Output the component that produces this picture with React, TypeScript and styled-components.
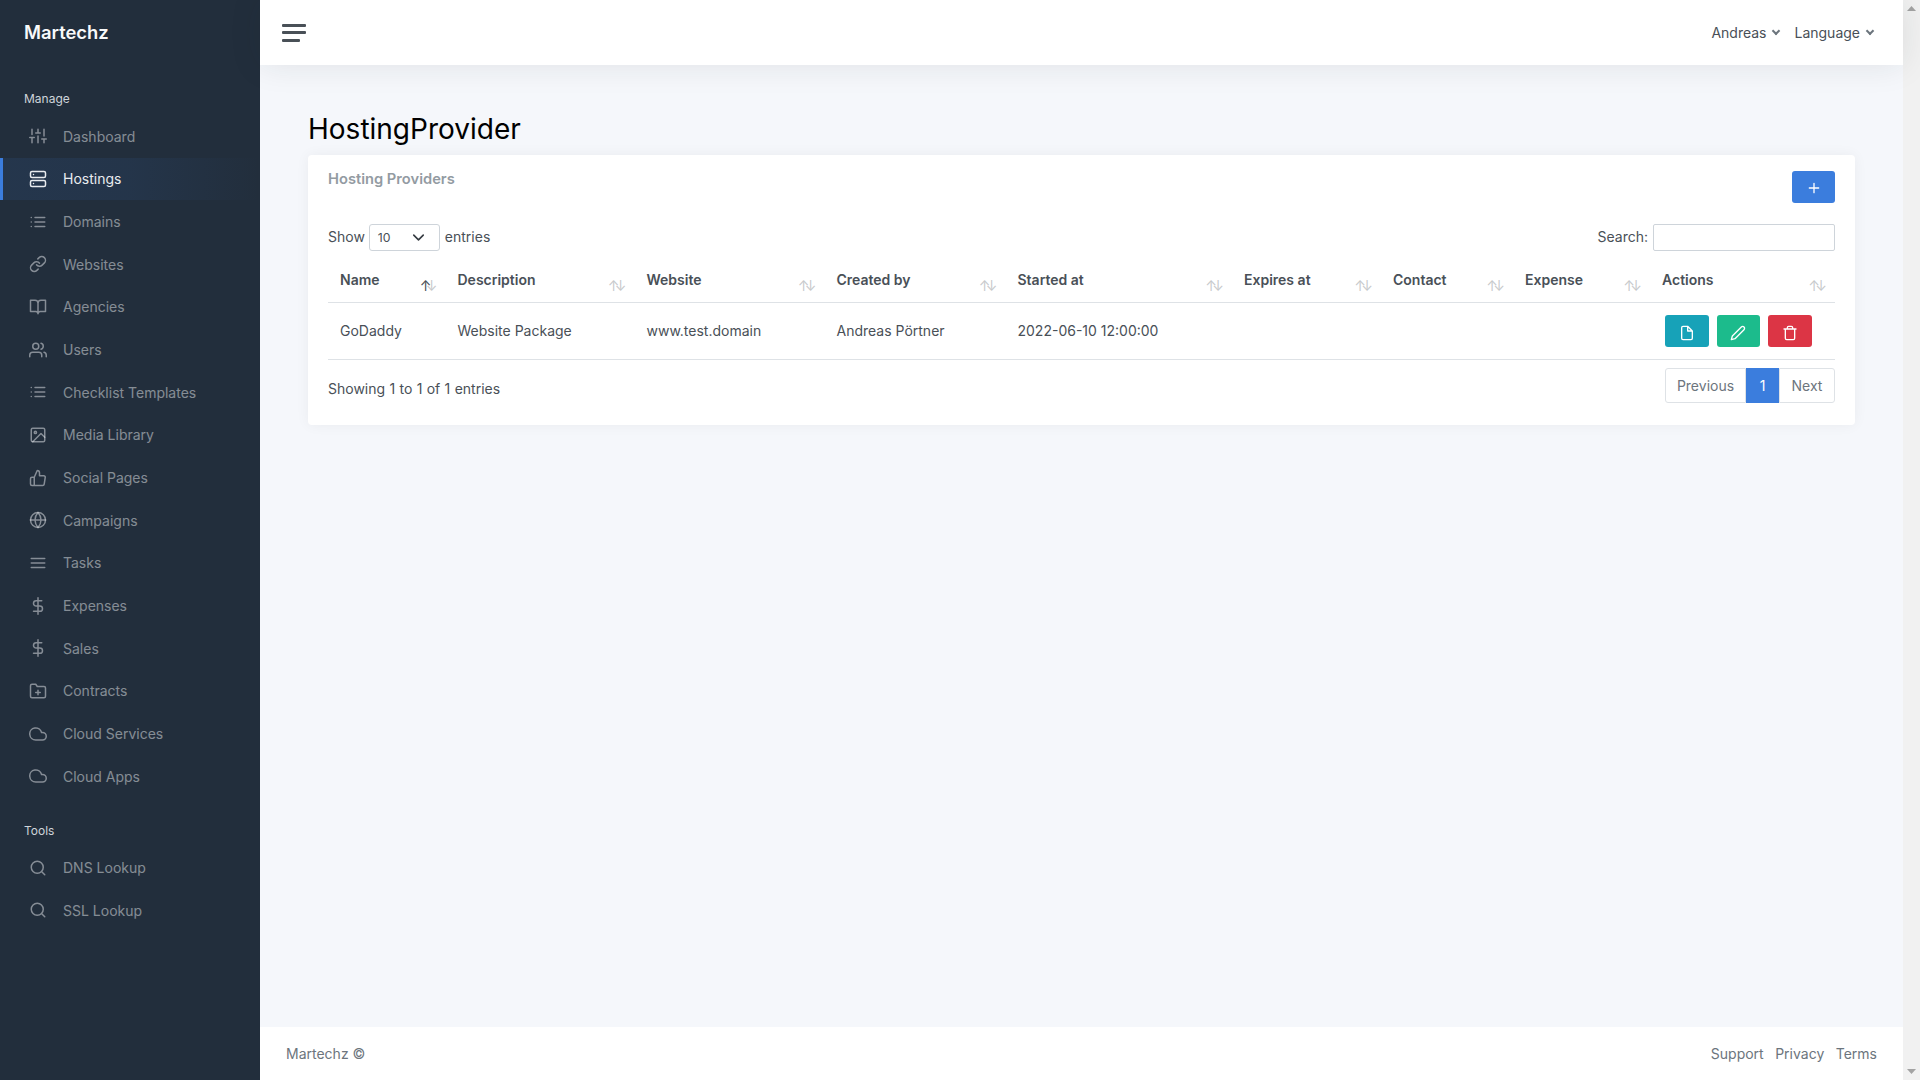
import React from "react";
import styled, { createGlobalStyle } from "styled-components";

const GlobalStyle = createGlobalStyle`
  html, body {
    margin: 0;
    padding: 0;
    height: 100%;
    overflow: hidden;
    background: #f5f7fb;
  }
  body {
    font-family: Inter, "Noto Sans", sans-serif;
    font-size: 14px;
    line-height: 1.5;
    color: #495057;
  }
  * {
    box-sizing: border-box;
  }
`;

const Shell = styled.div`
  display: flex;
  height: 1080px;
`;

const Sidebar = styled.nav`
  width: 260px;
  flex: none;
  background: #222e3c;
`;

const Brand = styled.div`
  padding: 19px 24px;
  height: 66px;
  font-size: 18.4px;
  line-height: 27px;
  font-weight: 600;
  color: #f8f9fa;
`;

const SectionHeader = styled.div`
  padding: 24px 24px 7px;
  font-size: 12px;
  line-height: 18px;
  color: #ced4da;
`;

const NavList = styled.ul`
  list-style: none;
  margin: 0;
  padding: 0;
`;

const NavLink = styled.a<{ $active?: boolean }>`
  display: flex;
  align-items: center;
  gap: 16px;
  height: 42.66px;
  padding: 0 26px;
  border-left: 3px solid ${({ $active }) => ($active ? "#3b7ddd" : "transparent")};
  background: ${({ $active }) =>
    $active
      ? "linear-gradient(90deg, rgba(59,125,221,.1), rgba(59,125,221,.0875) 50%, rgba(0,0,0,0))"
      : "transparent"};
  color: ${({ $active }) => ($active ? "#e9ecef" : "rgba(233,236,239,.5)")};
  font-size: 14px;
  text-decoration: none;
  cursor: pointer;
`;

const Icon = styled.svg<{ $size?: number }>`
  width: ${({ $size }) => $size ?? 18}px;
  height: ${({ $size }) => $size ?? 18}px;
  flex: none;
  fill: none;
  stroke: currentColor;
  stroke-width: 2;
  stroke-linecap: round;
  stroke-linejoin: round;
`;

const Main = styled.div`
  flex: 1;
  min-width: 0;
  display: flex;
  flex-direction: column;
`;

const Navbar = styled.header`
  position: relative;
  z-index: 1;
  height: 65px;
  flex: none;
  display: flex;
  align-items: center;
  justify-content: space-between;
  padding: 0 28px 0 22px;
  background: #fff;
  box-shadow: 0 0 2rem 0 rgba(33, 37, 41, 0.1);
`;

const Hamburger = styled.button`
  display: flex;
  flex-direction: column;
  align-items: flex-start;
  gap: 4.5px;
  width: 24px;
  margin: 0;
  padding: 0;
  border: 0;
  background: none;
  cursor: pointer;
`;

const HamburgerBar = styled.span<{ $short?: boolean }>`
  display: block;
  width: ${({ $short }) => ($short ? 18 : 24)}px;
  height: 3px;
  border-radius: 1px;
  background: #495057;
`;

const NavMenu = styled.div`
  display: flex;
  gap: 13px;
`;

const NavDropdown = styled.a`
  display: flex;
  align-items: center;
  gap: 7px;
  color: #495057;
  cursor: pointer;
`;

const Caret = styled.span`
  display: block;
  width: 6px;
  height: 6px;
  margin: -3px 2px 0 0;
  border: solid #6c757d;
  border-width: 0 2px 2px 0;
  transform: rotate(45deg);
`;

const Content = styled.main`
  flex: 1;
  padding: 48px 48px 0;
`;

const PageTitle = styled.h1`
  margin: 0 0 8px;
  font-size: 28px;
  line-height: 33.6px;
  font-weight: 400;
  color: #000;
`;

const Card = styled.section`
  height: 270px;
  padding: 16px 20px 22px;
  background: #fff;
  border-radius: 4px;
  box-shadow: 0 0 0.875rem 0 rgba(33, 37, 41, 0.05);
`;

const CardHead = styled.div`
  display: flex;
  justify-content: space-between;
  align-items: flex-start;
  height: 53px;
`;

const CardTitle = styled.h5`
  margin: 0;
  font-size: 14.7px;
  line-height: 17px;
  font-weight: 600;
  color: #939ba2;
`;

const AddButton = styled.button`
  display: flex;
  align-items: center;
  justify-content: center;
  width: 43px;
  height: 32px;
  padding: 3px 0 0;
  border: 0;
  border-radius: 3px;
  background: #3b7ddd;
  color: #fff;
`;

const Controls = styled.div`
  display: flex;
  justify-content: space-between;
  align-items: center;
  height: 27px;
`;

const ControlLabel = styled.label`
  display: flex;
  align-items: flex-start;
  gap: 5px;
  line-height: 25px;
`;

const SizeSelect = styled.div`
  display: flex;
  align-items: center;
  justify-content: space-between;
  width: 71px;
  height: 27px;
  margin-left: -1px;
  padding: 0 11px 0 8px;
  border: 1px solid #ced4da;
  border-radius: 3px;
  font-size: 12.25px;
  color: #495057;

  svg {
    color: #343a40;
  }
`;

const SearchInput = styled.input`
  width: 182px;
  height: 27px;
  padding: 0 8px;
  border: 1px solid #ced4da;
  border-radius: 2px;
  background: #fff;
`;

const Table = styled.table`
  width: 100%;
  margin-top: 12px;
  table-layout: fixed;
  border-collapse: collapse;
`;

const HeadCell = styled.th<{ $sorted?: boolean }>`
  position: relative;
  height: 40px;
  padding: 0 12px 5px;
  border-bottom: 1px solid #dee2e6;
  text-align: left;
  font-weight: 600;
  color: #495057;

  &::before,
  &::after {
    position: absolute;
    bottom: 6px;
    font-size: 14px;
    font-weight: 400;
    line-height: 1.5;
    opacity: 0.3;
  }
  &::before {
    content: "↑";
    right: ${({ $sorted }) => ($sorted ? 14 : 15)}px;
    opacity: ${({ $sorted }) => ($sorted ? 1 : 0.3)};
  }
  &::after {
    content: "↓";
    right: 8px;
  }
`;

const BodyCell = styled.td`
  height: 57px;
  padding: 0 12px 2px;
  border-bottom: 1px solid #dee2e6;
  vertical-align: middle;
`;

const Actions = styled.div`
  display: flex;
  gap: 8px;
  margin: 2px 0 0 3px;
`;

const ActionButton = styled.button<{ $color: string }>`
  display: flex;
  align-items: center;
  justify-content: center;
  width: 43.5px;
  height: 32px;
  padding: 4px 0 0;
  border: 0;
  border-radius: 3px;
  background: ${({ $color }) => $color};
  color: #fff;
`;

const TableFoot = styled.div`
  display: flex;
  justify-content: space-between;
  align-items: flex-start;
  margin-top: 8px;
`;

const Info = styled.div`
  padding-top: 10px;
  word-spacing: 0.4px;
`;

const Pagination = styled.ul`
  display: flex;
  height: 35px;
  margin: 0;
  padding: 0;
  list-style: none;
`;

const PageItem = styled.li<{ $active?: boolean; $width: number }>`
  display: flex;
  align-items: center;
  justify-content: center;
  width: ${({ $width }) => $width}px;
  border: 1px solid ${({ $active }) => ($active ? "#3b7ddd" : "#dee2e6")};
  background: ${({ $active }) => ($active ? "#3b7ddd" : "#fff")};
  color: ${({ $active }) => ($active ? "#fff" : "#6c757d")};

  &:first-child {
    border-radius: 3px 0 0 3px;
  }
  &:last-child {
    border-radius: 0 3px 3px 0;
  }
`;

const Footer = styled.footer`
  height: 53px;
  flex: none;
  display: flex;
  align-items: center;
  justify-content: space-between;
  padding: 0 26px;
  background: #fff;
  color: #6c757d;
`;

const FooterLinks = styled.div`
  display: flex;
  gap: 11.5px;
`;

const ScrollTrack = styled.div`
  width: 17px;
  flex: none;
  display: flex;
  flex-direction: column;
  justify-content: space-between;
  align-items: center;
  padding: 6px 0;
  background: #f1f1f1;
`;

const ScrollArrow = styled.svg`
  width: 9px;
  height: 5px;
  fill: #a3a3a3;
`;

// Feather icon shapes, written out since the packaged sets draw some of them differently
const icons: Record<string, React.ReactNode> = {
  sliders: (
    <path d="M4 21v-7M4 10V3M12 21v-9M12 8V3M20 21v-5M20 12V3M1 14h6M9 8h6M17 16h6" />
  ),
  server: (
    <>
      <rect x="2" y="2" width="20" height="8" rx="2" />
      <rect x="2" y="14" width="20" height="8" rx="2" />
      <path d="M6 6h.01M6 18h.01" />
    </>
  ),
  list: <path d="M8 6h13M8 12h13M8 18h13M3 6h.01M3 12h.01M3 18h.01" />,
  link: (
    <path d="M10 13a5 5 0 0 0 7.54.54l3-3a5 5 0 0 0-7.07-7.07l-1.72 1.71M14 11a5 5 0 0 0-7.54-.54l-3 3a5 5 0 0 0 7.07 7.07l1.71-1.71" />
  ),
  book: (
    <path d="M2 3h6a4 4 0 0 1 4 4v14a3 3 0 0 0-3-3H2zM22 3h-6a4 4 0 0 0-4 4v14a3 3 0 0 1 3-3h7z" />
  ),
  users: (
    <>
      <path d="M17 21v-2a4 4 0 0 0-4-4H5a4 4 0 0 0-4 4v2" />
      <circle cx="9" cy="7" r="4" />
      <path d="M23 21v-2a4 4 0 0 0-3-3.87M16 3.13a4 4 0 0 1 0 7.75" />
    </>
  ),
  image: (
    <>
      <rect x="3" y="3" width="18" height="18" rx="2" />
      <circle cx="8.5" cy="8.5" r="1.5" />
      <path d="M21 15l-5-5L5 21" />
    </>
  ),
  thumbsUp: (
    <path d="M14 9V5a3 3 0 0 0-3-3l-4 9v11h11.28a2 2 0 0 0 2-1.7l1.38-9a2 2 0 0 0-2-2.3zM7 22H4a2 2 0 0 1-2-2v-7a2 2 0 0 1 2-2h3" />
  ),
  globe: (
    <>
      <circle cx="12" cy="12" r="10" />
      <path d="M2 12h20M12 2a15.3 15.3 0 0 1 4 10 15.3 15.3 0 0 1-4 10 15.3 15.3 0 0 1-4-10 15.3 15.3 0 0 1 4-10z" />
    </>
  ),
  menu: <path d="M3 12h18M3 6h18M3 18h18" />,
  dollar: <path d="M12 1v22M17 5H9.5a3.5 3.5 0 0 0 0 7h5a3.5 3.5 0 0 1 0 7H6" />,
  folderPlus: (
    <path d="M22 19a2 2 0 0 1-2 2H4a2 2 0 0 1-2-2V5a2 2 0 0 1 2-2h5l2 3h9a2 2 0 0 1 2 2zM12 11v6M9 14h6" />
  ),
  cloud: <path d="M18 10h-1.26A8 8 0 1 0 9 20h9a5 5 0 0 0 0-10z" />,
  search: <path d="M19 11a8 8 0 1 1-16 0 8 8 0 0 1 16 0zM21 21l-4.35-4.35" />,
  file: <path d="M13 2H6a2 2 0 0 0-2 2v16a2 2 0 0 0 2 2h12a2 2 0 0 0 2-2V9zM13 2v7h7" />,
  edit: <path d="M17 3a2.828 2.828 0 1 1 4 4L7.5 20.5 2 22l1.5-5.5L17 3z" />,
  trash: (
    <path d="M3 6h18M19 6v14a2 2 0 0 1-2 2H7a2 2 0 0 1-2-2V6m3 0V4a2 2 0 0 1 2-2h4a2 2 0 0 1 2 2v2" />
  ),
  plus: <path d="M12 5v14M5 12h14" />,
  chevron: <path d="M6 9l6 6 6-6" />,
};

const Feather: React.FC<{ name: string; size?: number }> = ({ name, size }) => (
  <Icon viewBox="0 0 24 24" $size={size}>
    {icons[name]}
  </Icon>
);

const manageLinks = [
  { label: "Dashboard", icon: "sliders" },
  { label: "Hostings", icon: "server", active: true },
  { label: "Domains", icon: "list" },
  { label: "Websites", icon: "link" },
  { label: "Agencies", icon: "book" },
  { label: "Users", icon: "users" },
  { label: "Checklist Templates", icon: "list" },
  { label: "Media Library", icon: "image" },
  { label: "Social Pages", icon: "thumbsUp" },
  { label: "Campaigns", icon: "globe" },
  { label: "Tasks", icon: "menu" },
  { label: "Expenses", icon: "dollar" },
  { label: "Sales", icon: "dollar" },
  { label: "Contracts", icon: "folderPlus" },
  { label: "Cloud Services", icon: "cloud" },
  { label: "Cloud Apps", icon: "cloud" },
];

const toolLinks = [
  { label: "DNS Lookup", icon: "search" },
  { label: "SSL Lookup", icon: "search" },
];

const columns = [
  { label: "Name", width: 117.5, sorted: true },
  { label: "Description", width: 189 },
  { label: "Website", width: 190 },
  { label: "Created by", width: 181 },
  { label: "Started at", width: 226.5 },
  { label: "Expires at", width: 149 },
  { label: "Contact", width: 132 },
  { label: "Expense", width: 137 },
  { label: "Actions", width: 185 },
];

const NavGroup: React.FC<{ links: { label: string; icon: string; active?: boolean }[] }> = ({
  links,
}) => (
  <NavList>
    {links.map(link => (
      <li key={link.label}>
        <NavLink $active={link.active}>
          <Feather name={link.icon} />
          {link.label}
        </NavLink>
      </li>
    ))}
  </NavList>
);

const App: React.FC = () => (
  <Shell>
    <GlobalStyle />
    <Sidebar>
      <Brand>Martechz</Brand>
      <SectionHeader>Manage</SectionHeader>
      <NavGroup links={manageLinks} />
      <SectionHeader>Tools</SectionHeader>
      <NavGroup links={toolLinks} />
    </Sidebar>
    <Main>
      <Navbar>
        <Hamburger aria-label="Toggle sidebar">
          <HamburgerBar />
          <HamburgerBar />
          <HamburgerBar $short />
        </Hamburger>
        <NavMenu>
          <NavDropdown>
            Andreas <Caret />
          </NavDropdown>
          <NavDropdown>
            Language <Caret />
          </NavDropdown>
        </NavMenu>
      </Navbar>
      <Content>
        <PageTitle>HostingProvider</PageTitle>
        <Card>
          <CardHead>
            <CardTitle>Hosting Providers</CardTitle>
            <AddButton aria-label="Add">
              <Feather name="plus" size={16} />
            </AddButton>
          </CardHead>
          <Controls>
            <ControlLabel>
              Show
              <SizeSelect>
                10
                <Feather name="chevron" size={19} />
              </SizeSelect>
              entries
            </ControlLabel>
            <ControlLabel>
              Search:
              <SearchInput type="search" />
            </ControlLabel>
          </Controls>
          <Table>
            <colgroup>
              {columns.map(column => (
                <col key={column.label} width={column.width} />
              ))}
            </colgroup>
            <thead>
              <tr>
                {columns.map(column => (
                  <HeadCell key={column.label} $sorted={column.sorted}>
                    {column.label}
                  </HeadCell>
                ))}
              </tr>
            </thead>
            <tbody>
              <tr>
                <BodyCell>GoDaddy</BodyCell>
                <BodyCell>Website Package</BodyCell>
                <BodyCell>www.test.domain</BodyCell>
                <BodyCell>Andreas Pörtner</BodyCell>
                <BodyCell>2022-06-10 12:00:00</BodyCell>
                <BodyCell />
                <BodyCell />
                <BodyCell />
                <BodyCell>
                  <Actions>
                    <ActionButton $color="#17a2b8" aria-label="View">
                      <Feather name="file" size={16} />
                    </ActionButton>
                    <ActionButton $color="#1cbb8c" aria-label="Edit">
                      <Feather name="edit" size={16} />
                    </ActionButton>
                    <ActionButton $color="#dc3545" aria-label="Delete">
                      <Feather name="trash" size={16} />
                    </ActionButton>
                  </Actions>
                </BodyCell>
              </tr>
            </tbody>
          </Table>
          <TableFoot>
            <Info>Showing 1 to 1 of 1 entries</Info>
            <Pagination>
              <PageItem $width={81}>Previous</PageItem>
              <PageItem $width={33} $active>
                1
              </PageItem>
              <PageItem $width={56}>Next</PageItem>
            </Pagination>
          </TableFoot>
        </Card>
      </Content>
      <Footer>
        <span>Martechz ©</span>
        <FooterLinks>
          <span>Support</span>
          <span>Privacy</span>
          <span>Terms</span>
        </FooterLinks>
      </Footer>
    </Main>
    <ScrollTrack>
      <ScrollArrow viewBox="0 0 9 5">
        <path d="M4.5 0L9 5H0z" />
      </ScrollArrow>
      <ScrollArrow viewBox="0 0 9 5">
        <path d="M0 0h9L4.5 5z" />
      </ScrollArrow>
    </ScrollTrack>
  </Shell>
);

export default App;
